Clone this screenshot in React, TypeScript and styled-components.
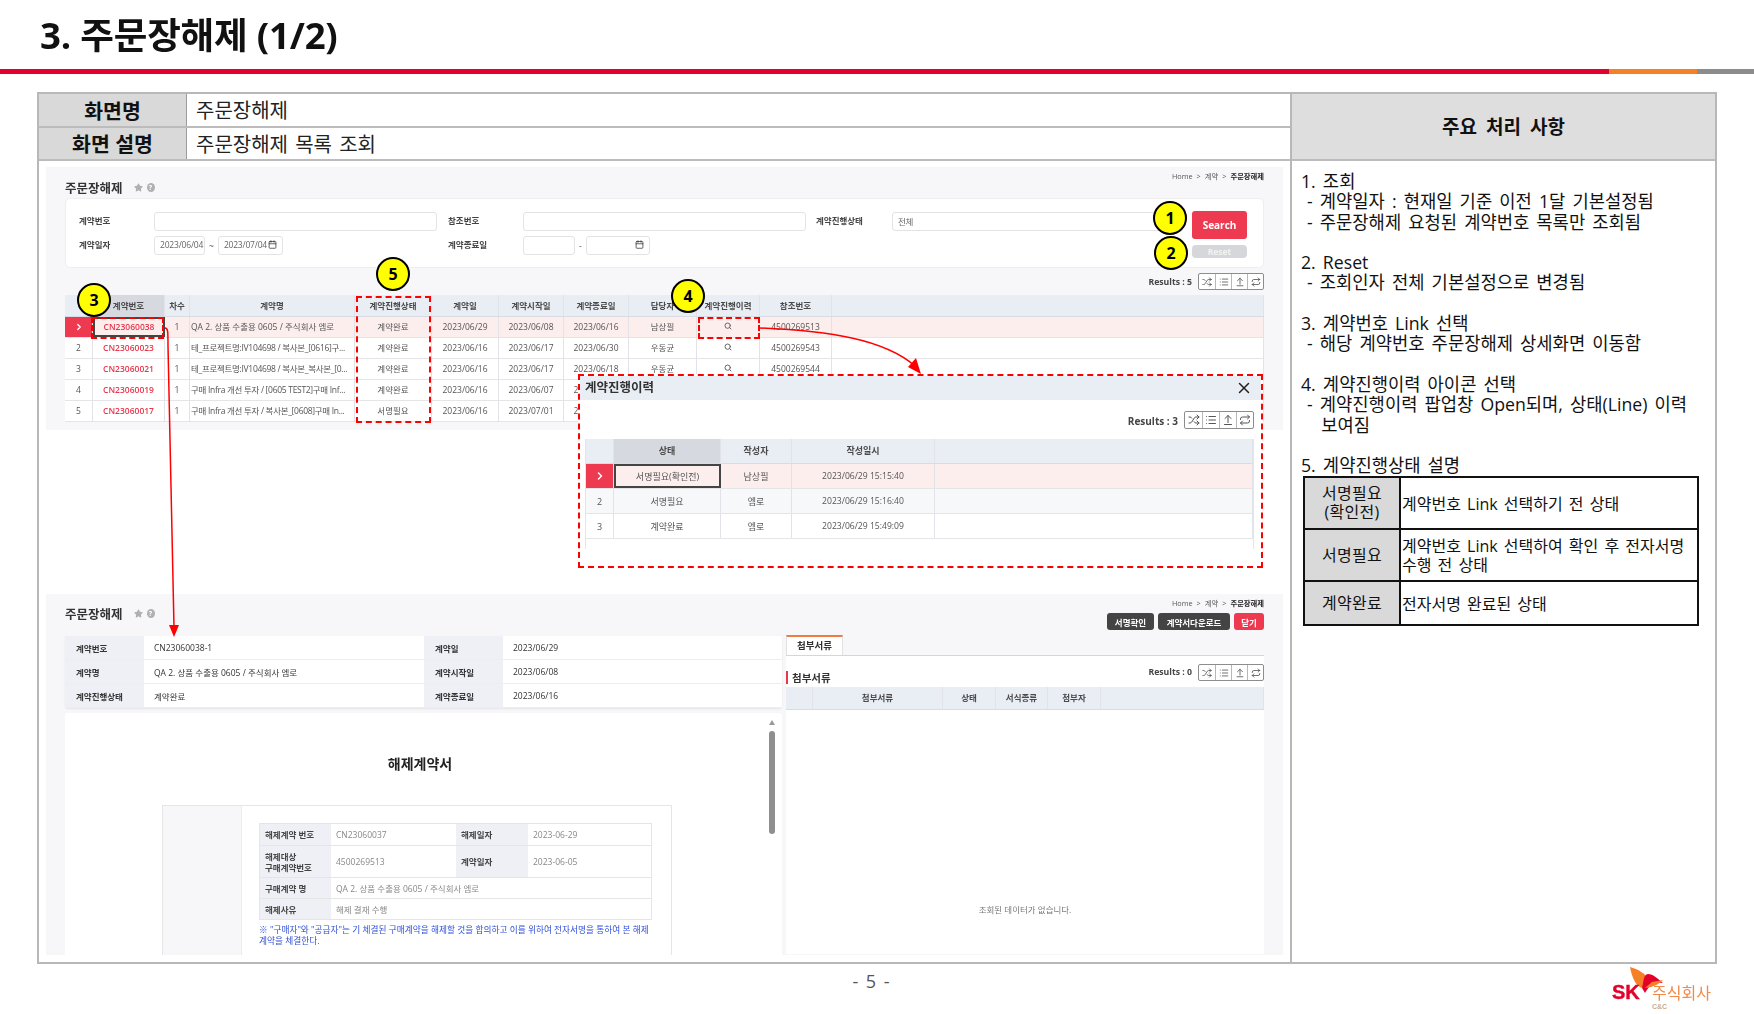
import styled, { createGlobalStyle } from 'styled-components';
import { ArrowUpFromLine, Calendar, ChevronRight, List, Repeat, Search, Shuffle, X } from 'lucide-react';
import { FaStar } from 'react-icons/fa';

const GlobalStyle = createGlobalStyle`
  html, body {
    margin: 0;
    padding: 0;
    background: #fff;
  }
  * {
    box-sizing: border-box;
  }
`;

const FONT = '"Open Sans", "Noto Sans CJK KR", "Noto Sans", sans-serif';

const Page = styled.div`
  width: 1754px;
  height: 1014px;
  overflow: hidden;
  display: flex;
  flex-direction: column;
  background: #fff;
  color: #111;
  font-family: ${FONT};
`;

const TitleBar = styled.header`
  height: 69px;
  padding: 0 0 3px 40px;
  display: flex;
  align-items: center;
`;

const Title = styled.h1`
  margin: 0;
  font-size: 36.6px;
  font-weight: 700;
  letter-spacing: -0.2px;
  color: #111;
  filter: blur(0.3px);
`;

const Rule = styled.div`
  height: 5px;
  display: flex;
`;

const RuleSeg = styled.div<{ $color: string; $w?: number }>`
  background: ${p => p.$color};
  ${p => (p.$w ? `width: ${p.$w}px;` : 'flex: 1;')}
`;

const Frame = styled.main`
  width: 1680px;
  height: 872px;
  margin: 18px 0 0 37px;
  display: flex;
  border: 2px solid #b8b8b8;
`;

const LeftCol = styled.section`
  width: 1253px;
  display: flex;
  flex-direction: column;
  border-right: 2px solid #b8b8b8;
`;

const InfoRow = styled.div`
  height: 33.5px;
  display: flex;
  border-bottom: 2px solid #bcbcbc;
`;

const InfoLabel = styled.div`
  width: 148px;
  background: #d9d9d9;
  border-right: 1px solid #9c9c9c;
  display: flex;
  align-items: center;
  justify-content: center;
  font-size: 20.5px;
  font-weight: 700;
`;

const InfoValue = styled.div`
  flex: 1;
  padding-left: 9px;
  display: flex;
  align-items: center;
  font-size: 20px;
  word-spacing: 2px;
  color: #222;
`;

/* everything the annotations point at lives in here, their offsets start at its corner */
const Canvas = styled.div`
  position: relative;
  flex: 1;
  padding: 6px 0 0 7px;
`;

const Panel = styled.div<{ $h: number; $top?: number }>`
  width: 1237px;
  height: ${p => p.$h}px;
  margin-top: ${p => p.$top || 0}px;
  padding: 5px 19px 0;
  background: #f7f7f9;
  overflow: hidden;
  filter: blur(0.3px);
  color: #444;
`;

const PanelHead = styled.div<{ $h: number }>`
  height: ${p => p.$h}px;
  display: flex;
  justify-content: space-between;
`;

const PageName = styled.div<{ $top: number }>`
  margin-top: ${p => p.$top}px;
  display: flex;
  align-items: center;
  height: 18px;
  font-size: 12.5px;
  font-weight: 700;
  color: #333;

  svg {
    margin-left: 11px;
  }
`;

const Help = styled.span`
  width: 8px;
  height: 9px;
  margin-left: 4px;
  border-radius: 50%;
  background: #aeb0b4;
  color: #fff;
  font-size: 7px;
  line-height: 9px;
  text-align: center;
`;

const Crumbs = styled.div`
  margin-top: -1px;
  display: flex;
  justify-content: flex-end;
  gap: 4px;
  font-size: 7.3px;
  line-height: 10px;
  color: #555;

  b {
    color: #222;
  }
`;

const SearchCard = styled.div`
  height: 70px;
  padding: 13px 16px 0 13px;
  display: flex;
  background: #fff;
  border: 1px solid #eeeeef;
  border-radius: 5px;
`;

const FieldGrid = styled.div`
  display: grid;
  grid-template-columns: 75px 283px 86px 283px 86px 272px;
  grid-auto-rows: 19px;
  row-gap: 5px;
  align-items: center;
  font-size: 8.5px;
`;

const FieldLabel = styled.div<{ $pad?: number }>`
  padding-left: ${p => p.$pad || 0}px;
  padding-bottom: 3px;
  font-weight: 700;
  color: #444;
`;

const Input = styled.div<{ $w?: number }>`
  height: 19px;
  ${p => (p.$w ? `width: ${p.$w}px;` : '')}
  padding: 0 5px 2px;
  display: flex;
  align-items: center;
  justify-content: space-between;
  background: #fff;
  border: 1px solid #e3e3e6;
  border-radius: 3px;
  color: #666;
  font-size: 8.5px;
  letter-spacing: -0.2px;
`;

const DateRange = styled.div`
  display: flex;
  align-items: center;
  gap: 4px;
  color: #555;
`;

const ButtonCol = styled.div`
  margin-left: 28px;
  width: 58px;
  display: flex;
  flex-direction: column;
  gap: 6px;
`;

const SearchButton = styled.div`
  height: 28px;
  margin-top: -1px;
  display: flex;
  align-items: center;
  justify-content: center;
  background: #ee3a50;
  border-radius: 3px;
  color: #fff;
  font-size: 10px;
  font-weight: 700;
`;

const ResetButton = styled.div`
  height: 13px;
  display: flex;
  align-items: center;
  justify-content: center;
  background: #d6d7da;
  border-radius: 4px;
  color: #f3f3f3;
  font-size: 8.5px;
  font-weight: 700;
`;

const ResultBar = styled.div<{ $h: number }>`
  height: ${p => p.$h}px;
  display: flex;
  justify-content: flex-end;
  align-items: center;
  gap: 6px;
`;

const ResultText = styled.span<{ $size?: number; $drop?: number }>`
  padding-top: ${p => p.$drop || 0}px;
  font-size: ${p => p.$size || 8.7}px;
  font-weight: 700;
  color: #444;
`;

const ToolBox = styled.div<{ $size?: number }>`
  display: flex;
  background: #fff;
  border: 1px solid #8d8d8d;
  border-radius: 2px;

  span {
    width: ${p => p.$size || 16}px;
    height: ${p => (p.$size ? p.$size - 1 : 15)}px;
    display: flex;
    align-items: center;
    justify-content: center;
    color: #555;
    border-left: 1px solid #b8b8b8;
  }

  span:first-child {
    border-left: 0;
  }
`;

const TableBody = styled.div`
  background: #fff;
  border-radius: 4px 4px 0 0;
`;

const GridRow = styled.div<{ $cols: string; $h: number; $bg?: string; $line?: string }>`
  display: grid;
  grid-template-columns: ${p => p.$cols};
  height: ${p => p.$h}px;
  background: ${p => p.$bg || '#fff'};
  border-bottom: 1px solid ${p => p.$line || '#e5e5e8'};
`;

const Cell = styled.div<{ $size?: number; $left?: boolean; $head?: boolean; $active?: boolean; $link?: boolean; $picked?: boolean; $tight?: boolean; $flush?: boolean }>`
  min-width: 0;
  display: flex;
  align-items: center;
  justify-content: ${p => (p.$left ? 'flex-start' : 'center')};
  padding: 0 0 ${p => (p.$flush ? 0 : 2)}px ${p => (p.$left ? 1 : 0)}px;
  white-space: nowrap;
  overflow: hidden;
  border-right: 1px solid #e2e3e8;
  font-size: ${p => p.$size || 8.5}px;
  font-weight: ${p => (p.$head ? 600 : p.$link ? 600 : 400)};
  letter-spacing: ${p => (p.$tight ? '-0.3px' : '0')};
  color: ${p => (p.$link ? '#e8374d' : p.$head ? '#4a4a4a' : '#555')};
  background: ${p => (p.$active ? '#d6d9df' : 'transparent')};
  ${p => (p.$picked ? 'border: 2px solid #444;' : '')}
`;

const RowPointer = styled(Cell)`
  padding: 0;
  background: #ee3a50;
  color: #fff;
`;

const DetailHead = styled.div`
  height: 37px;
  display: flex;
  justify-content: space-between;
`;

const ActionCol = styled.div`
  display: flex;
  flex-direction: column;
  gap: 5px;
`;

const Actions = styled.div`
  display: flex;
  gap: 4px;
`;

const ActionButton = styled.div<{ $w: number; $red?: boolean }>`
  width: ${p => p.$w}px;
  height: 17px;
  display: flex;
  align-items: center;
  justify-content: center;
  background: ${p => (p.$red ? '#ee3a50' : '#444')};
  border-radius: 3px;
  color: #fff;
  font-size: 8.5px;
  font-weight: 700;
`;

const DetailBody = styled.div`
  display: flex;
  gap: 4px;
`;

const DetailLeft = styled.div`
  width: 717px;
`;

const DetailRight = styled.div`
  width: 478px;
`;

const Summary = styled.div`
  background: #fff;
  border-radius: 3px;
  box-shadow: 0 1px 2px rgba(0, 0, 0, 0.08);
`;

const SummaryRow = styled.div`
  height: 24px;
  display: grid;
  grid-template-columns: 79px 280px 79px 279px;
  align-items: stretch;
  border-bottom: 1px solid #eee;
  font-size: 8.5px;
`;

const SummaryLabel = styled.div`
  padding-left: 11px;
  display: flex;
  align-items: center;
  background: #eef0f5;
  font-weight: 700;
  color: #333;
`;

const SummaryValue = styled.div`
  padding-left: 10px;
  display: flex;
  align-items: center;
  color: #333;
`;

const DocBox = styled.div`
  position: relative;
  height: 247px;
  margin-top: 5px;
  padding-top: 41px;
  background: #fff;
  border-radius: 3px;
  overflow: hidden;
`;

const DocTitle = styled.div`
  height: 20px;
  margin: 0 0 31px;
  padding-right: 7px;
  text-align: center;
  font-size: 14px;
  line-height: 20px;
  font-weight: 700;
  color: #222;
`;

const ScrollArrow = styled.div`
  position: absolute;
  top: 7px;
  right: 7px;
  width: 0;
  height: 0;
  border-left: 3px solid transparent;
  border-right: 3px solid transparent;
  border-bottom: 5px solid #999;
`;

const ScrollThumb = styled.div`
  position: absolute;
  top: 18px;
  right: 7px;
  width: 6px;
  height: 103px;
  border-radius: 3px;
  background: #8f8f8f;
`;

const Sheet = styled.div`
  width: 510px;
  height: 160px;
  margin-left: 97px;
  display: flex;
  border: 1px solid #e6e6e6;
`;

const SheetStripe = styled.div`
  width: 79px;
  background: #f7f7f9;
  border-right: 1px solid #ececec;
`;

const SheetContent = styled.div`
  padding: 17px 0 0 17px;
`;

const Contract = styled.div`
  width: 393px;
  border: 1px solid #e5e5e5;
  border-bottom: 0;
`;

const ContractRow = styled.div<{ $h: number; $wide?: boolean }>`
  height: ${p => p.$h}px;
  display: grid;
  grid-template-columns: ${p => (p.$wide ? '71px 1fr' : '71px 125px 72px 1fr')};
  border-bottom: 1px solid #e5e5e5;
  font-size: 8.5px;
`;

const ContractLabel = styled.div`
  padding-left: 5px;
  display: flex;
  align-items: center;
  background: #eef0f6;
  font-weight: 700;
  line-height: 11px;
  color: #444;
`;

const ContractValue = styled.div`
  padding-left: 5px;
  display: flex;
  align-items: center;
  color: #888;
`;

const Notice = styled.p`
  width: 393px;
  margin: 5px 0 0;
  font-size: 8.7px;
  line-height: 11px;
  white-space: nowrap;
  color: #2f4fd8;
`;

const Tab = styled.div`
  width: 57px;
  height: 20px;
  margin-top: -1px;
  padding-bottom: 3px;
  display: flex;
  align-items: center;
  justify-content: center;
  background: #fff;
  border: 1px solid #e2e2e2;
  border-top: 2px solid #ef7b45;
  border-bottom: 0;
  font-size: 9.5px;
  font-weight: 700;
  color: #333;
`;

const TabLine = styled.div`
  border-top: 1px solid #d6d6d6;
  background: #fff;
`;

const SectionBar = styled.div`
  height: 31px;
  padding-top: 8px;
  display: flex;
  justify-content: space-between;
  background: #fff;
`;

const SectionTitle = styled.div`
  margin-top: 7px;
  height: 13px;
  padding-left: 4px;
  display: flex;
  align-items: center;
  border-left: 2px solid #e8374d;
  font-size: 10.5px;
  font-weight: 700;
  color: #333;
`;

const ResultGroup = styled.div`
  display: flex;
  align-items: flex-start;
  gap: 6px;
`;

const EmptyBody = styled.div`
  height: 244px;
  padding-top: 193px;
  background: #fff;
  text-align: center;
  font-size: 8.5px;
  color: #777;
`;

const DashedBox = styled.div<{ $x: number; $y: number; $w: number; $h: number }>`
  position: absolute;
  left: ${p => p.$x}px;
  top: ${p => p.$y}px;
  width: ${p => p.$w}px;
  height: ${p => p.$h}px;
  border: 2px dashed #f00;
`;

const Popup = styled(DashedBox)`
  background: #fff;
  padding: 0 7px 0 5px;
  overflow: hidden;
`;

const PopupHead = styled.div`
  height: 24px;
  margin: 0 -7px 0 -5px;
  padding: 0 8px 4px 5px;
  display: flex;
  align-items: center;
  justify-content: space-between;
  background: #e9edf4;
  font-size: 12.5px;
  font-weight: 700;
  color: #333;
  filter: blur(0.3px);

  svg {
    margin-top: 4px;
  }
`;

const PopupBody = styled.div`
  filter: blur(0.3px);
`;

const PopupTable = styled.div`
  height: 110px;
  border-left: 1px solid #e5e5e8;
  border-right: 1px solid #e5e5e8;
`;

const Marker = styled.div<{ $x: number; $y: number }>`
  position: absolute;
  left: ${p => p.$x - 17}px;
  top: ${p => p.$y - 17}px;
  width: 34px;
  height: 34px;
  display: flex;
  align-items: center;
  justify-content: center;
  background: #ffff00;
  border: 2px solid #000;
  border-radius: 50%;
  font-size: 16px;
  font-weight: 700;
  color: #000;
`;

const ArrowLayer = styled.svg`
  position: absolute;
  left: 0;
  top: 0;
  pointer-events: none;
`;

const RightCol = styled.aside`
  flex: 1;
  display: flex;
  flex-direction: column;
`;

const RightHead = styled.div`
  height: 67px;
  padding-bottom: 2px;
  display: flex;
  align-items: center;
  justify-content: center;
  background: #dedede;
  border-bottom: 2px solid #bcbcbc;
  font-size: 19px;
  font-weight: 700;
  word-spacing: 4px;
`;

const Notes = styled.div`
  padding: 10px 0 0 9px;
  font-size: 17.7px;
  line-height: 20.3px;
  word-spacing: 2.5px;
  color: #111;
`;

const NoteLine = styled.div<{ $sub?: boolean; $gap?: boolean }>`
  min-height: 20.3px;
  padding-left: ${p => (p.$sub ? 6 : 0)}px;
  margin-top: ${p => (p.$gap ? 20.3 : 0)}px;
  white-space: pre;
`;

const StateTable = styled.div`
  width: 396px;
  margin: 1px 0 0 2px;
  border: 2px solid #111;
  font-size: 16px;
  line-height: 19px;
  word-spacing: 2px;
`;

const StateRow = styled.div<{ $h: number }>`
  height: ${p => p.$h}px;
  display: flex;
  border-bottom: 2px solid #111;

  &:last-child {
    border-bottom: 0;
  }
`;

const StateLabel = styled.div`
  width: 96px;
  display: flex;
  align-items: center;
  justify-content: center;
  text-align: center;
  background: #d9d9d9;
  border-right: 2px solid #111;
  letter-spacing: 0.3px;
`;

const StateText = styled.div`
  flex: 1;
  display: flex;
  align-items: center;
  padding: 2px 6px 0 1px;
`;

const Footer = styled.footer`
  flex: 1;
  display: grid;
  grid-template-columns: 1fr auto 1fr;
  padding-right: 12px;
`;

const PageNumber = styled.div`
  grid-column: 2;
  padding-top: 5px;
  font-size: 18px;
  color: #555;
  word-spacing: 3px;
`;

const Logo = styled.svg`
  grid-column: 3;
  justify-self: end;
  margin: 2px 30px 0 0;
  filter: blur(0.3px);
`;

const Tools = ({ size }: { size?: number }) => {
  const s = size ? 12 : 10;
  return (
    <ToolBox $size={size}>
      <span><Shuffle size={s} /></span>
      <span><List size={s} /></span>
      <span><ArrowUpFromLine size={s} /></span>
      <span><Repeat size={s} /></span>
    </ToolBox>
  );
};

const LIST_COLS = '28px 72px 25px 165px 77px 67px 65px 65px 68px 63px 72px 1fr';
const HISTORY_COLS = '28px 107px 71px 143px 1fr';
const FILE_COLS = '27px 130px 53px 52px 53px 1fr';

const listRows = [
  ['CN23060038', 'QA 2. 상품 수출용 0605 / 주식회사 엠로', '계약완료', '2023/06/29', '2023/06/08', '2023/06/16', '남상필', '4500269513'],
  ['CN23060023', '테_프로젝트명:IV104698 / 복사본_[0616]구...', '계약완료', '2023/06/16', '2023/06/17', '2023/06/30', '우동균', '4500269543'],
  ['CN23060021', '테_프로젝트명:IV104698 / 복사본_복사본_[0...', '계약완료', '2023/06/16', '2023/06/17', '2023/06/18', '우동균', '4500269544'],
  ['CN23060019', '구매 Infra 개선 투자 / [0605 TEST2]구매 Inf...', '계약완료', '2023/06/16', '2023/06/07', '2023/06/16', '남상필', '4500269541'],
  ['CN23060017', '구매 Infra 개선 투자 / 복사본_[0608]구매 In...', '서명필요', '2023/06/16', '2023/07/01', '2023/07/31', '남상필', '4500269540'],
];

const historyRows = [
  ['서명필요(확인전)', '남상필', '2023/06/29 15:15:40'],
  ['서명필요', '엠로', '2023/06/29 15:16:40'],
  ['계약완료', '엠로', '2023/06/29 15:49:09'],
];

const ListPanel = () => (
  <Panel $h={263}>
    <PanelHead $h={26}>
      <PageName $top={6}>
        주문장해제<FaStar size={9} color="#aeb0b4" /><Help>?</Help>
      </PageName>
      <Crumbs>
        <span>Home</span><span>&gt;</span><span>계약</span><span>&gt;</span><b>주문장해제</b>
      </Crumbs>
    </PanelHead>
    <SearchCard>
      <FieldGrid>
        <FieldLabel>계약번호</FieldLabel>
        <Input />
        <FieldLabel $pad={11}>참조번호</FieldLabel>
        <Input />
        <FieldLabel $pad={10}>계약진행상태</FieldLabel>
        <Input>전체</Input>
        <FieldLabel>계약일자</FieldLabel>
        <DateRange>
          <Input $w={51}>2023/06/04</Input>~
          <Input $w={65}>2023/07/04<Calendar size={9} color="#333" /></Input>
        </DateRange>
        <FieldLabel $pad={11}>계약종료일</FieldLabel>
        <DateRange>
          <Input $w={52} />-
          <Input $w={64}><i /><Calendar size={9} color="#333" /></Input>
        </DateRange>
      </FieldGrid>
      <ButtonCol>
        <SearchButton>Search</SearchButton>
        <ResetButton>Reset</ResetButton>
      </ButtonCol>
    </SearchCard>
    <ResultBar $h={27}>
      <ResultText>Results : 5</ResultText>
      <Tools />
    </ResultBar>
    <TableBody>
      <GridRow $cols={LIST_COLS} $h={22} $bg="#e9edf4" $line="#d8dbe2">
        <Cell $head />
        <Cell $head $active>계약번호</Cell>
        <Cell $head>차수</Cell>
        <Cell $head>계약명</Cell>
        <Cell $head>계약진행상태</Cell>
        <Cell $head>계약일</Cell>
        <Cell $head>계약시작일</Cell>
        <Cell $head>계약종료일</Cell>
        <Cell $head>담당자</Cell>
        <Cell $head>계약진행이력</Cell>
        <Cell $head>참조번호</Cell>
        <Cell $head />
      </GridRow>
      {listRows.map((row, i) => (
        <GridRow key={row[0]} $cols={LIST_COLS} $h={21} $bg={i === 0 ? '#fdeeee' : '#fff'}>
          {i === 0 ? <RowPointer><ChevronRight size={10} strokeWidth={3} /></RowPointer> : <Cell>{i + 1}</Cell>}
          <Cell $link $picked={i === 0}>{row[0]}</Cell>
          <Cell>1</Cell>
          <Cell $left $tight={i > 0}>{row[1]}</Cell>
          <Cell>{row[2]}</Cell>
          <Cell>{row[3]}</Cell>
          <Cell>{row[4]}</Cell>
          <Cell>{row[5]}</Cell>
          <Cell>{row[6]}</Cell>
          <Cell><Search size={8} color="#666" strokeWidth={3} /></Cell>
          <Cell>{row[7]}</Cell>
          <Cell />
        </GridRow>
      ))}
    </TableBody>
  </Panel>
);

const DetailPanel = () => (
  <Panel $h={361} $top={164}>
    <DetailHead>
      <PageName $top={5}>
        주문장해제<FaStar size={9} color="#aeb0b4" /><Help>?</Help>
      </PageName>
      <ActionCol>
        <Crumbs>
          <span>Home</span><span>&gt;</span><span>계약</span><span>&gt;</span><b>주문장해제</b>
        </Crumbs>
        <Actions>
          <ActionButton $w={47}>서명확인</ActionButton>
          <ActionButton $w={72}>계약서다운로드</ActionButton>
          <ActionButton $w={30} $red>닫기</ActionButton>
        </Actions>
      </ActionCol>
    </DetailHead>
    <DetailBody>
      <DetailLeft>
        <Summary>
          <SummaryRow>
            <SummaryLabel>계약번호</SummaryLabel>
            <SummaryValue>CN23060038-1</SummaryValue>
            <SummaryLabel>계약일</SummaryLabel>
            <SummaryValue>2023/06/29</SummaryValue>
          </SummaryRow>
          <SummaryRow>
            <SummaryLabel>계약명</SummaryLabel>
            <SummaryValue>QA 2. 상품 수출용 0605 / 주식회사 엠로</SummaryValue>
            <SummaryLabel>계약시작일</SummaryLabel>
            <SummaryValue>2023/06/08</SummaryValue>
          </SummaryRow>
          <SummaryRow>
            <SummaryLabel>계약진행상태</SummaryLabel>
            <SummaryValue>계약완료</SummaryValue>
            <SummaryLabel>계약종료일</SummaryLabel>
            <SummaryValue>2023/06/16</SummaryValue>
          </SummaryRow>
        </Summary>
        <DocBox>
          <ScrollArrow />
          <ScrollThumb />
          <DocTitle>해제계약서</DocTitle>
          <Sheet>
            <SheetStripe />
            <SheetContent>
              <Contract>
                <ContractRow $h={22}>
                  <ContractLabel>해제계약 번호</ContractLabel>
                  <ContractValue>CN23060037</ContractValue>
                  <ContractLabel>해제일자</ContractLabel>
                  <ContractValue>2023-06-29</ContractValue>
                </ContractRow>
                <ContractRow $h={32}>
                  <ContractLabel>해제대상<br />구매계약번호</ContractLabel>
                  <ContractValue>4500269513</ContractValue>
                  <ContractLabel>계약일자</ContractLabel>
                  <ContractValue>2023-06-05</ContractValue>
                </ContractRow>
                <ContractRow $h={21} $wide>
                  <ContractLabel>구매계약 명</ContractLabel>
                  <ContractValue>QA 2. 상품 수출용 0605 / 주식회사 엠로</ContractValue>
                </ContractRow>
                <ContractRow $h={21} $wide>
                  <ContractLabel>해제사유</ContractLabel>
                  <ContractValue>해제 결재 수행</ContractValue>
                </ContractRow>
              </Contract>
              <Notice>
                ※ "구매자"와 "공급자"는 기 체결된 구매계약을 해제할 것을 합의하고 이를 위하여 전자서명을 통하여 본 해제<br />
                계약을 체결한다.
              </Notice>
            </SheetContent>
          </Sheet>
        </DocBox>
      </DetailLeft>
      <DetailRight>
        <Tab>첨부서류</Tab>
        <TabLine />
        <SectionBar>
          <SectionTitle>첨부서류</SectionTitle>
          <ResultGroup>
            <ResultText $drop={2}>Results : 0</ResultText>
            <Tools />
          </ResultGroup>
        </SectionBar>
        <GridRow $cols={FILE_COLS} $h={23} $bg="#e9edf4" $line="#d8dbe2">
          <Cell $head />
          <Cell $head>첨부서류</Cell>
          <Cell $head>상태</Cell>
          <Cell $head>서식종류</Cell>
          <Cell $head>첨부자</Cell>
          <Cell $head />
        </GridRow>
        <EmptyBody>조회된 데이터가 없습니다.</EmptyBody>
      </DetailRight>
    </DetailBody>
  </Panel>
);

const HistoryPopup = () => (
  <Popup $x={539} $y={213} $w={685} $h={194}>
    <PopupHead>
      계약진행이력
      <X size={18} color="#222" />
    </PopupHead>
    <PopupBody>
      <ResultBar $h={39}>
        <ResultText $size={10} $drop={2}>Results : 3</ResultText>
        <Tools size={17} />
      </ResultBar>
      <PopupTable>
        <GridRow $cols={HISTORY_COLS} $h={25} $bg="#e9edf4" $line="#d8dbe2">
          <Cell $head />
          <Cell $head $active $size={9}>상태</Cell>
          <Cell $head $size={9}>작성자</Cell>
          <Cell $head $size={9}>작성일시</Cell>
          <Cell $head />
        </GridRow>
        {historyRows.map((row, i) => (
          <GridRow key={row[2]} $cols={HISTORY_COLS} $h={25} $bg={i === 0 ? '#fdeeee' : i === 1 ? '#f7f8f9' : '#fff'}>
            {i === 0 ? <RowPointer><ChevronRight size={12} strokeWidth={3} /></RowPointer> : <Cell $size={9} $flush>{i + 1}</Cell>}
            <Cell $size={9} $flush $picked={i === 0}>{row[0]}</Cell>
            <Cell $size={9} $flush>{row[1]}</Cell>
            <Cell $size={8.6} $flush>{row[2]}</Cell>
            <Cell />
          </GridRow>
        ))}
      </PopupTable>
    </PopupBody>
  </Popup>
);

const Arrows = () => (
  <ArrowLayer width={1252} height={803} fill="none">
    <path d="M126 167 C129 167 129 170 129 185 L135 466" stroke="#f00" strokeWidth={1.5} />
    <polygon points="130,464 140,464 135,476" fill="#f00" />
    <path d="M721 167 C790 170 845 178 876 205" stroke="#f00" strokeWidth={1.5} />
    <polygon points="882,213 869,206 877,197" fill="#f00" />
  </ArrowLayer>
);

const SkLogo = () => (
  <Logo width={100} height={46} viewBox="0 0 100 46">
    <path d="M18 1 C26 3 34 8 36 13 L30 22 C24 20 20 12 18 1 Z" fill="#f58025" />
    <path d="M30 22 C32 15 31 9 36 8 C41 8 45 12 51 17 L40 16 C38 20 36 22 33 27 Z" fill="#e4002b" />
    <path d="M40 16 L51 14 C47 18 42 21 33 22 Z" fill="#f58025" />
    <text x="0" y="33" fontFamily="Liberation Sans" fontSize="20" fontWeight="700" fill="#e4002b" stroke="#e4002b" strokeWidth="0.4">SK</text>
    <text x="40" y="33" fontFamily="Noto Sans CJK KR" fontSize="16" fill="#ef8a48">주식회사</text>
    <text x="40" y="43" fontFamily="Liberation Sans" fontSize="7" fontWeight="700" fill="#c9a98c">C&amp;C</text>
  </Logo>
);

export default function App() {
  return (
    <Page>
      <GlobalStyle />
      <TitleBar>
        <Title>3. 주문장해제 (1/2)</Title>
      </TitleBar>
      <Rule>
        <RuleSeg $color="#e6002d" />
        <RuleSeg $color="#f58025" $w={88} />
        <RuleSeg $color="#8c8c8c" $w={57} />
      </Rule>
      <Frame>
        <LeftCol>
          <InfoRow>
            <InfoLabel>화면명</InfoLabel>
            <InfoValue>주문장해제</InfoValue>
          </InfoRow>
          <InfoRow>
            <InfoLabel>화면 설명</InfoLabel>
            <InfoValue>주문장해제 목록 조회</InfoValue>
          </InfoRow>
          <Canvas>
            <ListPanel />
            <DetailPanel />
            <HistoryPopup />
            <DashedBox $x={52} $y={156} $w={73} $h={22} />
            <DashedBox $x={317} $y={135} $w={75} $h={127} />
            <DashedBox $x={659} $y={156} $w={62} $h={22} />
            <Arrows />
            <Marker $x={1131} $y={57}>1</Marker>
            <Marker $x={1132} $y={92}>2</Marker>
            <Marker $x={55} $y={139}>3</Marker>
            <Marker $x={649} $y={135}>4</Marker>
            <Marker $x={354} $y={113}>5</Marker>
          </Canvas>
        </LeftCol>
        <RightCol>
          <RightHead>주요 처리 사항</RightHead>
          <Notes>
            <NoteLine>1. 조회</NoteLine>
            <NoteLine $sub>- 계약일자 : 현재일 기준 이전 1달 기본설정됨</NoteLine>
            <NoteLine $sub>- 주문장해제 요청된 계약번호 목록만 조회됨</NoteLine>
            <NoteLine $gap>2. Reset</NoteLine>
            <NoteLine $sub>- 조회인자 전체 기본설정으로 변경됨</NoteLine>
            <NoteLine $gap>3. 계약번호 Link 선택</NoteLine>
            <NoteLine $sub>- 해당 계약번호 주문장해제 상세화면 이동함</NoteLine>
            <NoteLine $gap>4. 계약진행이력 아이콘 선택</NoteLine>
            <NoteLine $sub>- 계약진행이력 팝업창 Open되며, 상태(Line) 이력</NoteLine>
            <NoteLine $sub>  보여짐</NoteLine>
            <NoteLine $gap>5. 계약진행상태 설명</NoteLine>
            <StateTable>
              <StateRow $h={52}>
                <StateLabel>서명필요<br />(확인전)</StateLabel>
                <StateText>계약번호 Link 선택하기 전 상태</StateText>
              </StateRow>
              <StateRow $h={52}>
                <StateLabel>서명필요</StateLabel>
                <StateText>계약번호 Link 선택하여 확인 후 전자서명 수행 전 상태</StateText>
              </StateRow>
              <StateRow $h={42}>
                <StateLabel>계약완료</StateLabel>
                <StateText>전자서명 완료된 상태</StateText>
              </StateRow>
            </StateTable>
          </Notes>
        </RightCol>
      </Frame>
      <Footer>
        <PageNumber>- 5 -</PageNumber>
        <SkLogo />
      </Footer>
    </Page>
  );
}
